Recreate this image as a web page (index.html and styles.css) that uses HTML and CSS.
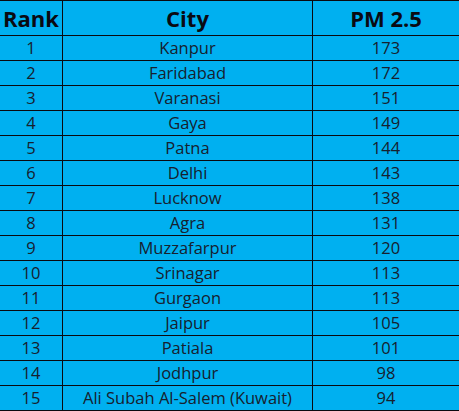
FILE: index.html
```html
<!DOCTYPE html>
<html>
<head>
<meta charset="utf-8">
<link rel="stylesheet" href="styles.css">
</head>
<body>
<table class="rank-table">
  <thead>
    <tr><th class="c-rank">Rank</th><th class="c-city">City</th><th class="c-pm">PM 2.5</th></tr>
  </thead>
  <tbody>
    <tr><td>1</td><td>Kanpur</td><td>173</td></tr>
    <tr><td>2</td><td>Faridabad</td><td>172</td></tr>
    <tr><td>3</td><td>Varanasi</td><td>151</td></tr>
    <tr><td>4</td><td>Gaya</td><td>149</td></tr>
    <tr><td>5</td><td>Patna</td><td>144</td></tr>
    <tr><td>6</td><td>Delhi</td><td>143</td></tr>
    <tr><td>7</td><td>Lucknow</td><td>138</td></tr>
    <tr><td>8</td><td>Agra</td><td>131</td></tr>
    <tr><td>9</td><td>Muzzafarpur</td><td>120</td></tr>
    <tr><td>10</td><td>Srinagar</td><td>113</td></tr>
    <tr><td>11</td><td>Gurgaon</td><td>113</td></tr>
    <tr><td>12</td><td>Jaipur</td><td>105</td></tr>
    <tr><td>13</td><td>Patiala</td><td>101</td></tr>
    <tr><td>14</td><td>Jodhpur</td><td>98</td></tr>
    <tr><td>15</td><td>Ali Subah Al-Salem (Kuwait)</td><td>94</td></tr>
  </tbody>
</table>
</body>
</html>
```
FILE: styles.css
```css
html, body {
  margin: 0;
  padding: 0;
  background: #ffffff;
}
.rank-table {
  border-collapse: collapse;
  table-layout: fixed;
  width: 458px;
  margin-left: -1px;
  background: #00b0f0;
  font-family: "Open Sans", Lato, sans-serif;
  color: #17202e;
}
.rank-table th,
.rank-table td {
  border: 1px solid #0a0a10;
  text-align: center;
  padding: 0;
  white-space: nowrap;
}
.rank-table th {
  height: 34px;
  font-size: 22px;
  line-height: 28px;
  font-weight: 700;
  color: #0a0a12;
}
.rank-table td {
  height: 24px;
  font-size: 16.5px;
  line-height: 20px;
}
.c-rank { width: 62px; }
.c-city { width: 249px; }
.c-pm { width: 146px; }
```
